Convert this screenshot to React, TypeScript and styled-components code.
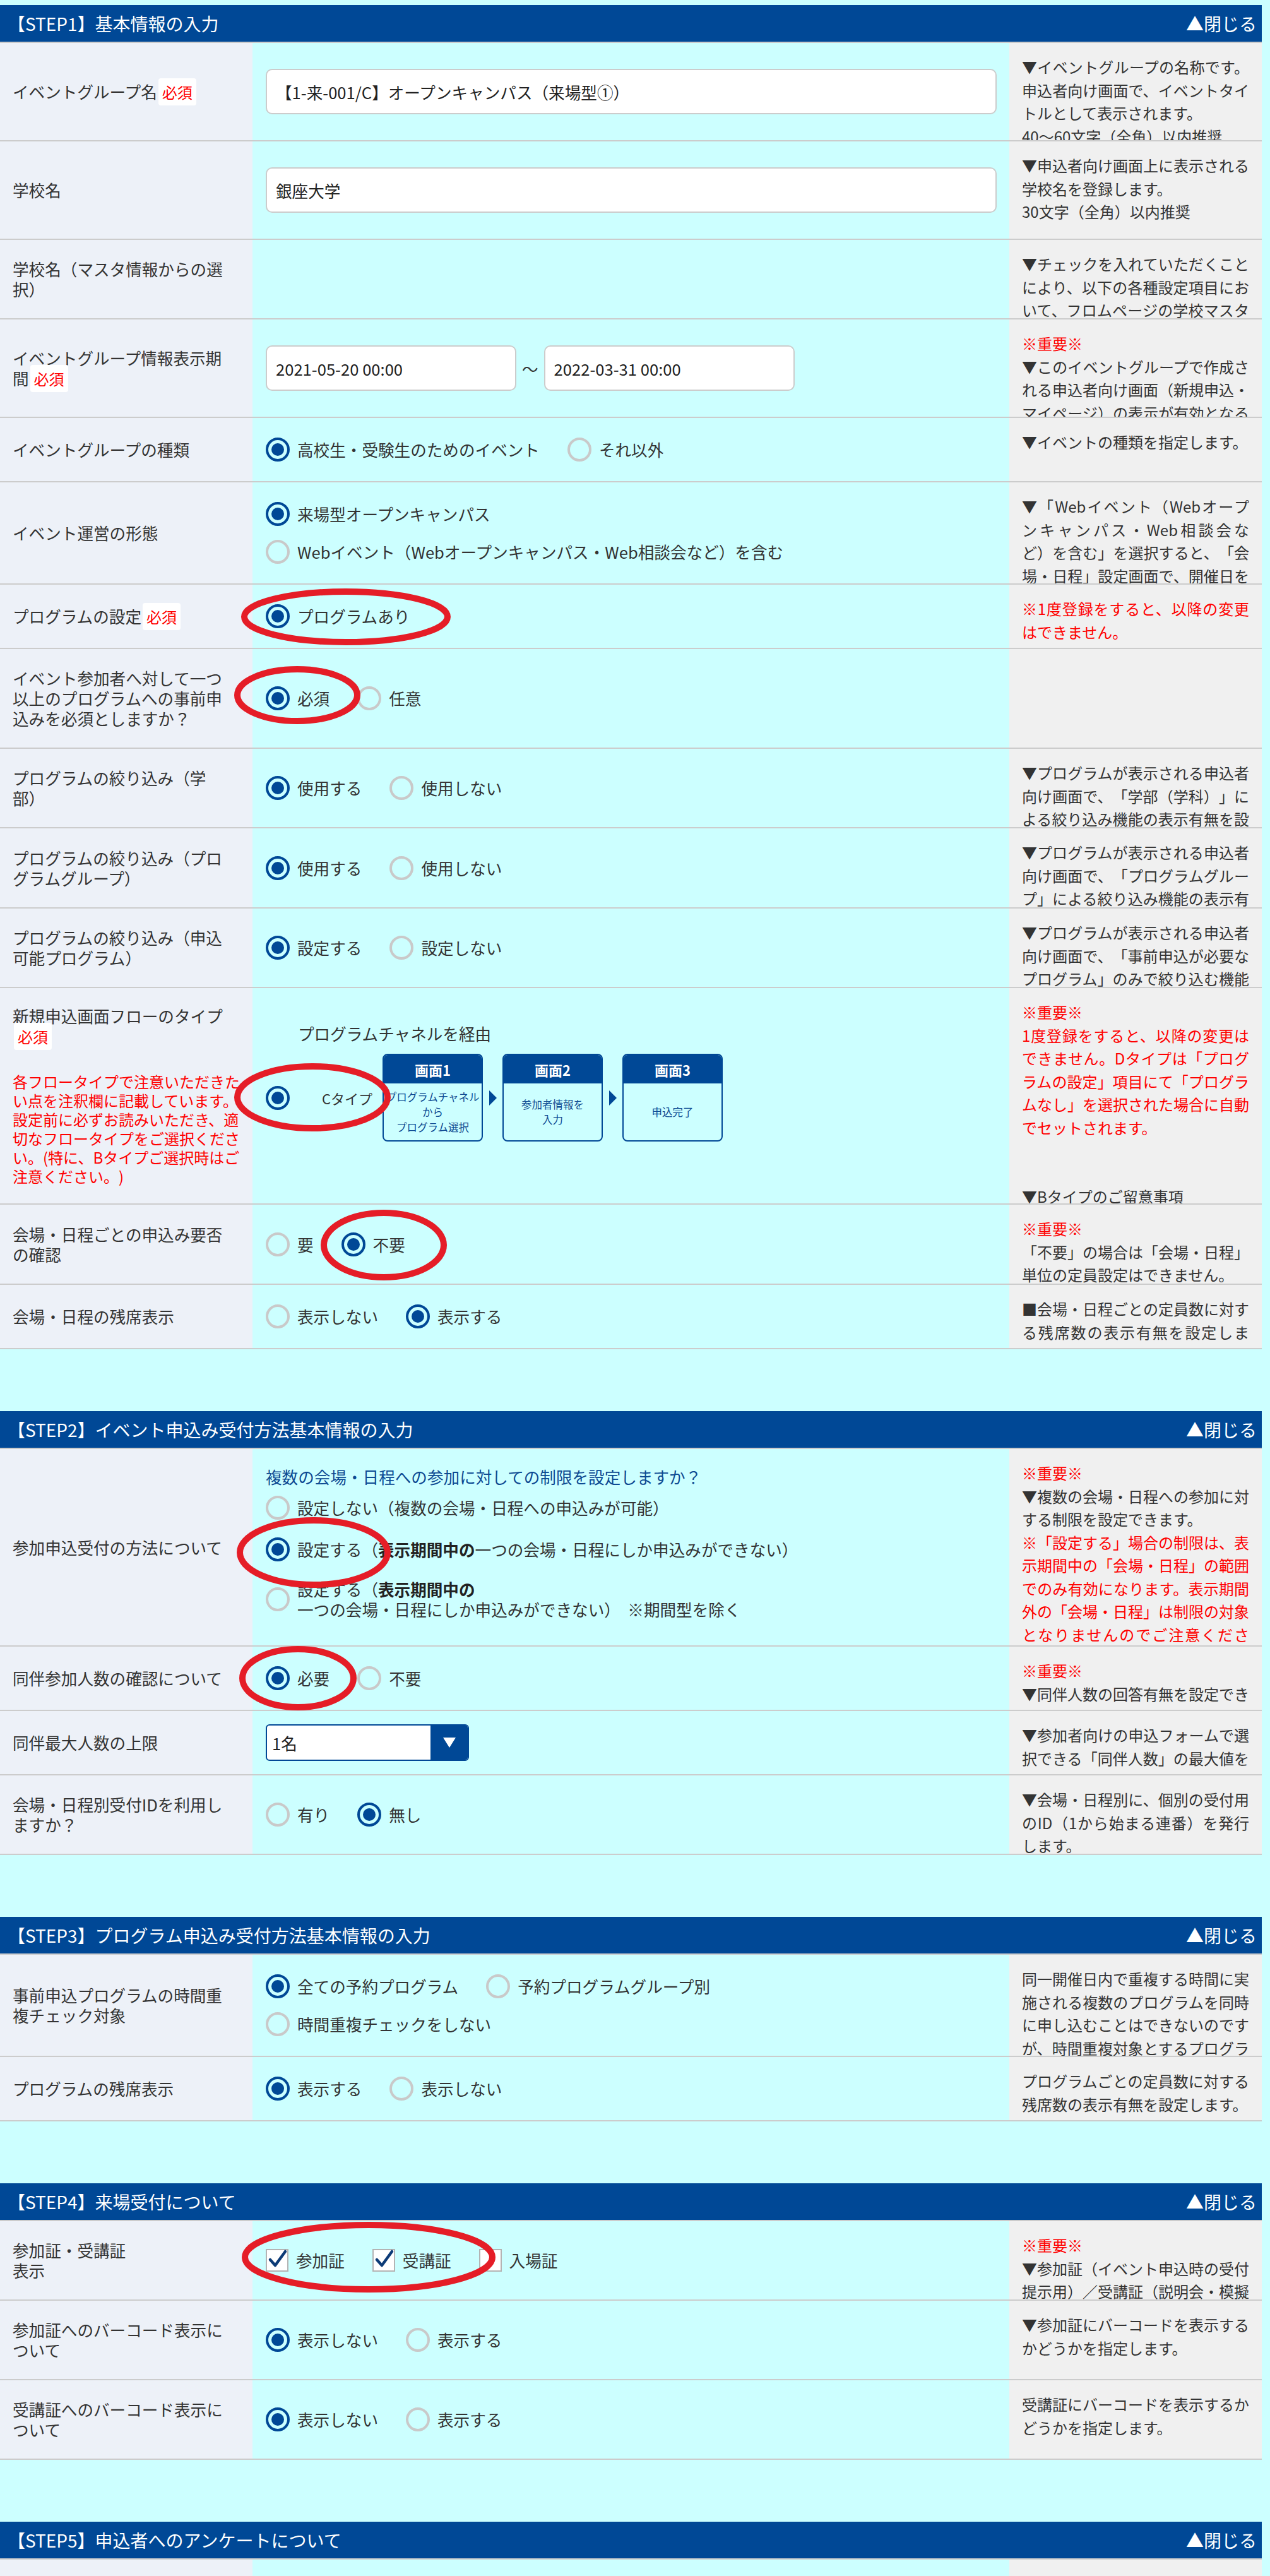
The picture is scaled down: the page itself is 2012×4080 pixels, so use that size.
import React from 'react';
import styled, { createGlobalStyle } from 'styled-components';

type Opt = { text: React.ReactNode; on?: boolean };

interface FieldProps {
  h: number;
  label: React.ReactNode;
  req?: boolean;
  guide?: React.ReactNode;
  note?: React.ReactNode;
  top?: boolean;
  children?: React.ReactNode;
}

// 赤丸の注記（スクリーンショット上の手書きマーク）
const marks = [
  { cx: 548, cy: 977, rx: 161, ry: 40 },
  { cx: 471, cy: 1101, rx: 95, ry: 41 },
  { cx: 495, cy: 1738, rx: 119, ry: 49 },
  { cx: 608, cy: 1972, rx: 95, ry: 51 },
  { cx: 497, cy: 2459, rx: 117, ry: 51 },
  { cx: 472, cy: 2658, rx: 88, ry: 46 },
  { cx: 584, cy: 3575, rx: 196, ry: 51 },
];

function Radio({ text, on }: Opt) {
  return (
    <Option>
      <RadioMark $on={on} />
      <span>{text}</span>
    </Option>
  );
}

function Radios({ items }: { items: Opt[] }) {
  return (
    <OptionRow>
      {items.map((o, i) => (
        <Radio key={i} {...o} />
      ))}
    </OptionRow>
  );
}

function CheckItem({ text, on }: Opt) {
  return (
    <Option>
      <CheckMark>
        {on && (
          <svg width="32" height="32" viewBox="0 0 32 32">
            <path d="M5 15l8 9L29 2" fill="none" stroke="#0c3b77" strokeWidth="4.5" strokeLinecap="round" strokeLinejoin="round" />
          </svg>
        )}
      </CheckMark>
      <span>{text}</span>
    </Option>
  );
}

function Field({ h, label, req, guide, note, top, children }: FieldProps) {
  return (
    <Row $h={h}>
      <LabelCell>
        <LabelText>
          {label}
          {req && <Req>必須</Req>}
        </LabelText>
        {guide && <Guide>{guide}</Guide>}
      </LabelCell>
      <ValueCell $top={top}>{children}</ValueCell>
      <NoteCell>{note}</NoteCell>
    </Row>
  );
}

function Header({ title }: { title: string }) {
  return (
    <SectionHeader>
      <span>{title}</span>
      <span>▲閉じる</span>
    </SectionHeader>
  );
}

function App() {
  return (
    <Page>
      <GlobalStyle />

      <Section>
        <Header title="【STEP1】基本情報の入力" />
        <Field
          h={156}
          label="イベントグループ名"
          req
          note={<>▼イベントグループの名称です。申込者向け画面で、イベントタイトルとして表示されます。<br />40〜60文字（全角）以内推奨</>}
        >
          <TextInput readOnly value="【1-来-001/C】オープンキャンパス（来場型①）" />
        </Field>
        <Field h={156} label="学校名" note={<>▼申込者向け画面上に表示される学校名を登録します。<br />30文字（全角）以内推奨</>}>
          <TextInput readOnly value="銀座大学" />
        </Field>
        <Field
          h={126}
          label="学校名（マスタ情報からの選択）"
          note="▼チェックを入れていただくことにより、以下の各種設定項目において、フロムページの学校マスタ情報が反映されます。"
        />
        <Field
          h={156}
          label="イベントグループ情報表示期間"
          req
          note={<><Red>※重要※</Red><br />▼このイベントグループで作成される申込者向け画面（新規申込・マイページ）の表示が有効となる期間を設定します。</>}
        >
          <DateRange>
            <TextInput $w={397} readOnly value="2021-05-20 00:00" />
            <Tilde>〜</Tilde>
            <TextInput $w={397} readOnly value="2022-03-31 00:00" />
          </DateRange>
        </Field>
        <Field h={102} label="イベントグループの種類" note="▼イベントの種類を指定します。">
          <Radios items={[{ text: '高校生・受験生のためのイベント', on: true }, { text: 'それ以外' }]} />
        </Field>
        <Field
          h={162}
          label="イベント運営の形態"
          note="▼「Webイベント（Webオープンキャンパス・Web相談会など）を含む」を選択すると、「会場・日程」設定画面で、開催日を設定せずに登録できます。"
        >
          <Stack>
            <Radios items={[{ text: '来場型オープンキャンパス', on: true }]} />
            <Radios items={[{ text: 'Webイベント（Webオープンキャンパス・Web相談会など）を含む' }]} />
          </Stack>
        </Field>
        <Field h={102} label="プログラムの設定" req note={<Red>※1度登録をすると、以降の変更はできません。</Red>}>
          <Radios items={[{ text: 'プログラムあり', on: true }]} />
        </Field>
        <Field h={158} label="イベント参加者へ対して一つ以上のプログラムへの事前申込みを必須としますか？">
          <Radios items={[{ text: '必須', on: true }, { text: '任意' }]} />
        </Field>
        <Field
          h={126}
          label="プログラムの絞り込み（学部）"
          note="▼プログラムが表示される申込者向け画面で、「学部（学科）」による絞り込み機能の表示有無を設定します。"
        >
          <Radios items={[{ text: '使用する', on: true }, { text: '使用しない' }]} />
        </Field>
        <Field
          h={127}
          label="プログラムの絞り込み（プログラムグループ）"
          note="▼プログラムが表示される申込者向け画面で、「プログラムグループ」による絞り込み機能の表示有無を設定します。"
        >
          <Radios items={[{ text: '使用する', on: true }, { text: '使用しない' }]} />
        </Field>
        <Field
          h={126}
          label="プログラムの絞り込み（申込可能プログラム）"
          note="▼プログラムが表示される申込者向け画面で、「事前申込が必要なプログラム」のみで絞り込む機能の表示有無を設定します。"
        >
          <Radios items={[{ text: '設定する', on: true }, { text: '設定しない' }]} />
        </Field>
        <Field
          h={343}
          label="新規申込画面フローのタイプ"
          req
          top
          guide="各フロータイプで注意いただきたい点を注釈欄に記載しています。設定前に必ずお読みいただき、適切なフロータイプをご選択ください。(特に、Bタイプご選択時はご注意ください。)"
          note={<><Red>※重要※<br />1度登録をすると、以降の変更はできません。Dタイプは「プログラムの設定」項目にて「プログラムなし」を選択された場合に自動でセットされます。</Red><br /><br /><br />▼Bタイプのご留意事項</>}
        >
          <FlowTitle>プログラムチャネルを経由</FlowTitle>
          <FlowRow>
            <RadioMark $on />
            <CType>Cタイプ</CType>
            <Screen>
              <ScreenHead>画面1</ScreenHead>
              <ScreenBody>プログラムチャネル<br />から<br />プログラム選択</ScreenBody>
            </Screen>
            <Arrow />
            <Screen>
              <ScreenHead>画面2</ScreenHead>
              <ScreenBody>参加者情報を<br />入力</ScreenBody>
            </Screen>
            <Arrow />
            <Screen>
              <ScreenHead>画面3</ScreenHead>
              <ScreenBody>申込完了</ScreenBody>
            </Screen>
          </FlowRow>
        </Field>
        <Field
          h={127}
          label="会場・日程ごとの申込み要否の確認"
          note={<><Red>※重要※</Red><br />「不要」の場合は「会場・日程」単位の定員設定はできません。</>}
        >
          <Radios items={[{ text: '要' }, { text: '不要', on: true }]} />
        </Field>
        <Field h={102} label="会場・日程の残席表示" note="■会場・日程ごとの定員数に対する残席数の表示有無を設定します。">
          <Radios items={[{ text: '表示しない' }, { text: '表示する', on: true }]} />
        </Field>
      </Section>

      <Section>
        <Header title="【STEP2】イベント申込み受付方法基本情報の入力" />
        <Field
          h={313}
          label="参加申込受付の方法について"
          note={<><Red>※重要※</Red><br />▼複数の会場・日程への参加に対する制限を設定できます。<br /><Red>※「設定する」場合の制限は、表示期間中の「会場・日程」の範囲でのみ有効になります。表示期間外の「会場・日程」は制限の対象となりませんのでご注意ください。</Red></>}
        >
          <Question>複数の会場・日程への参加に対しての制限を設定しますか？</Question>
          <Choice><Radio text="設定しない（複数の会場・日程への申込みが可能）" /></Choice>
          <Choice><Radio on text={<>設定する（<b>表示期間中の</b>一つの会場・日程にしか申込みができない）</>} /></Choice>
          <Choice><Radio text={<>設定する（<b>表示期間中の</b><br />一つの会場・日程にしか申込みができない）&nbsp; ※期間型を除く</>} /></Choice>
        </Field>
        <Field h={102} label="同伴参加人数の確認について" note={<><Red>※重要※</Red><br />▼同伴人数の回答有無を設定できます。</>}>
          <Radios items={[{ text: '必要', on: true }, { text: '不要' }]} />
        </Field>
        <Field h={102} label="同伴最大人数の上限" note="▼参加者向けの申込フォームで選択できる「同伴人数」の最大値を設定します。">
          <Select>
            <SelectText>1名</SelectText>
            <SelectButton>
              <svg width="20" height="16" viewBox="0 0 20 16">
                <polygon points="0,0 20,0 10,16" fill="#fff" />
              </svg>
            </SelectButton>
          </Select>
        </Field>
        <Field h={126} label="会場・日程別受付IDを利用しますか？" note="▼会場・日程別に、個別の受付用のID（1から始まる連番）を発行します。">
          <Radios items={[{ text: '有り' }, { text: '無し', on: true }]} />
        </Field>
      </Section>

      <Section>
        <Header title="【STEP3】プログラム申込み受付方法基本情報の入力" />
        <Field
          h={162}
          label="事前申込プログラムの時間重複チェック対象"
          note="同一開催日内で重複する時間に実施される複数のプログラムを同時に申し込むことはできないのですが、時間重複対象とするプログラムの範囲を指定します。"
        >
          <Stack>
            <Radios items={[{ text: '全ての予約プログラム', on: true }, { text: '予約プログラムグループ別' }]} />
            <Radios items={[{ text: '時間重複チェックをしない' }]} />
          </Stack>
        </Field>
        <Field h={102} label="プログラムの残席表示" note="プログラムごとの定員数に対する残席数の表示有無を設定します。">
          <Radios items={[{ text: '表示する', on: true }, { text: '表示しない' }]} />
        </Field>
      </Section>

      <Section>
        <Header title="【STEP4】来場受付について" />
        <Field
          h={126}
          label={<>参加証・受講証<br />表示</>}
          note={<><Red>※重要※</Red><br />▼参加証（イベント申込時の受付提示用）／受講証（説明会・模擬授業などの受講時提示用）</>}
        >
          <OptionRow>
            <CheckItem text="参加証" on />
            <CheckItem text="受講証" on />
            <CheckItem text="入場証" />
          </OptionRow>
        </Field>
        <Field h={126} label="参加証へのバーコード表示について" note="▼参加証にバーコードを表示するかどうかを指定します。">
          <Radios items={[{ text: '表示しない', on: true }, { text: '表示する' }]} />
        </Field>
        <Field h={126} label="受講証へのバーコード表示について" note="受講証にバーコードを表示するかどうかを指定します。">
          <Radios items={[{ text: '表示しない', on: true }, { text: '表示する' }]} />
        </Field>
      </Section>

      <Section>
        <Header title="【STEP5】申込者へのアンケートについて" />
        <Field h={102} label="アンケートの利用" note="▼申込者向けのアンケートを設定します。">
          <Radios items={[{ text: '利用する', on: true }, { text: '利用しない' }]} />
        </Field>
      </Section>

      <Marks width="2012" height="4080">
        {marks.map((m, i) => (
          <ellipse key={i} cx={m.cx} cy={m.cy} rx={m.rx} ry={m.ry} fill="none" stroke="#e51d27" strokeWidth="10" />
        ))}
      </Marks>
    </Page>
  );
}

export default App;

const GlobalStyle = createGlobalStyle`
  * { box-sizing: border-box; }
  html, body { background: #ccffff; }
  body {
    margin: 0;
    font-family: "Noto Sans CJK JP", "Noto Sans", sans-serif;
    color: #333;
    text-spacing-trim: space-all;
  }
`;

const Page = styled.div`
  position: relative;
  width: 1999px;
  padding-top: 8px;
`;

const Section = styled.section`
  margin-bottom: 98px;
`;

const SectionHeader = styled.div`
  display: flex;
  align-items: center;
  justify-content: space-between;
  height: 60px;
  padding: 0 8px 0 12px;
  background: #004896;
  border-bottom: 2px solid #ccc;
  color: #fff;
  font-size: 28px;
`;

const Row = styled.div<{ $h: number }>`
  display: flex;
  height: ${p => p.$h}px;
  border-bottom: 2px solid #ccc;
`;

const LabelCell = styled.div`
  flex: 0 0 400px;
  display: flex;
  flex-direction: column;
  justify-content: center;
  padding: 0 20px;
  background: #edf1f8;
  font-size: 25.6px;
  line-height: 32px;
`;

const LabelText = styled.div`
  max-width: 340px;
`;

const Req = styled.span`
  margin-left: 2px;
  padding: 4px 6px;
  border-radius: 4px;
  background: #fff;
  color: #ff0000;
  font-size: 24px;
`;

const Guide = styled.div`
  margin-top: 40px;
  color: #ff0000;
  font-size: 24px;
  line-height: 30px;
`;

const ValueCell = styled.div<{ $top?: boolean }>`
  flex: 0 0 1199px;
  display: flex;
  flex-direction: column;
  justify-content: ${p => (p.$top ? 'flex-start' : 'center')};
  align-items: flex-start;
  padding: ${p => (p.$top ? '56px' : '0')} 20px 0 21px;
`;

const NoteCell = styled.div`
  flex: 0 0 400px;
  overflow: hidden;
  padding: 20px 20px 0;
  background: #f0f0f0;
  font-size: 24px;
  line-height: 36.5px;
  text-align: justify;
`;

const Red = styled.span`
  color: #ff0000;
`;

const TextInput = styled.input<{ $w?: number }>`
  width: ${p => (p.$w ? `${p.$w}px` : '100%')};
  height: 72px;
  padding: 0 14px;
  border: 2px solid #ccc;
  border-radius: 10px;
  background: #fff;
  font-family: inherit;
  font-size: 25.6px;
  color: #222;
  outline: none;
`;

const DateRange = styled.div`
  display: flex;
  align-items: center;
`;

const Tilde = styled.span`
  margin: 0 9px;
  font-size: 25.6px;
`;

const Stack = styled.div`
  display: flex;
  flex-direction: column;
  gap: 22px;
`;

const OptionRow = styled.div`
  display: flex;
  align-items: center;
`;

const Option = styled.label`
  display: inline-flex;
  align-items: center;
  margin-right: 44px;
  font-size: 25.6px;
  line-height: 32px;
  color: #333;
  b {
    font-weight: bold;
    color: #222;
  }
`;

const RadioMark = styled.span<{ $on?: boolean }>`
  flex: 0 0 38px;
  display: flex;
  align-items: center;
  justify-content: center;
  width: 38px;
  height: 38px;
  margin-right: 12px;
  border: 4px solid ${p => (p.$on ? '#004896' : '#c9c9c9')};
  border-radius: 50%;
  &::after {
    content: '';
    width: 20px;
    height: 20px;
    border-radius: 50%;
    background: ${p => (p.$on ? '#004896' : 'transparent')};
  }
`;

const CheckMark = styled.span`
  flex: 0 0 36px;
  width: 36px;
  height: 36px;
  margin-right: 12px;
  border: 2px solid #b4b4b4;
  background: #fff;
  svg {
    display: block;
    overflow: visible;
  }
`;

const Question = styled.div`
  color: #0d4a92;
  font-size: 25.6px;
  line-height: 32px;
`;

const Choice = styled.div`
  padding: 14px 0;
`;

const Select = styled.div`
  display: flex;
  width: 322px;
  height: 58px;
  overflow: hidden;
  border: 2px solid #004896;
  border-radius: 6px;
  background: #fff;
`;

const SelectText = styled.span`
  flex: 1;
  display: flex;
  align-items: center;
  padding-left: 8px;
  font-size: 25.6px;
  color: #222;
`;

const SelectButton = styled.span`
  flex: 0 0 59px;
  display: flex;
  align-items: center;
  justify-content: center;
  background: #004896;
`;

const FlowTitle = styled.div`
  margin: 0 0 16px 51px;
  font-size: 25.6px;
  line-height: 32px;
`;

const FlowRow = styled.div`
  display: flex;
  align-items: center;
`;

const CType = styled.span`
  margin: 0 16px 0 39px;
  font-size: 22px;
`;

const Screen = styled.div`
  display: flex;
  flex-direction: column;
  width: 159px;
  height: 139px;
  overflow: hidden;
  border: 2px solid #004896;
  border-radius: 8px;
`;

const ScreenHead = styled.div`
  display: flex;
  align-items: center;
  justify-content: center;
  height: 45px;
  background: #004896;
  color: #fff;
  font-size: 22px;
  font-weight: bold;
`;

const ScreenBody = styled.div`
  flex: 1;
  display: flex;
  align-items: center;
  justify-content: center;
  text-align: center;
  color: #0d4a92;
  font-size: 16.5px;
  line-height: 24px;
  white-space: nowrap;
`;

const Arrow = styled.span`
  width: 0;
  height: 0;
  margin: 0 9px 0 10px;
  border-top: 12px solid transparent;
  border-bottom: 12px solid transparent;
  border-left: 12px solid #004896;
`;

const Marks = styled.svg`
  position: absolute;
  top: 0;
  left: 0;
  pointer-events: none;
`;
